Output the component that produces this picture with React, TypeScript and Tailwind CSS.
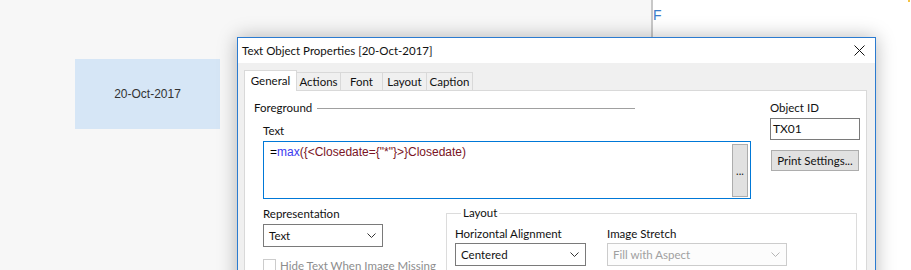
import React from "react";

const ui = { fontFamily: "Lato, 'Liberation Sans', sans-serif" };
const arial = { fontFamily: "'Liberation Sans', Arial, sans-serif" };

function Chevron({ color = "#333" }: { color?: string }) {
  return (
    <svg width="9" height="5" viewBox="0 0 9 5" className="shrink-0">
      <polyline points="0.5,0.5 4.5,4.5 8.5,0.5" fill="none" stroke={color} strokeWidth="1" />
    </svg>
  );
}

function Select({ value, width, disabled }: { value: string; width: string; disabled?: boolean }) {
  return (
    <div
      className={`${width} h-[23px] flex items-center justify-between pl-[5px] pr-[6px] border ${
        disabled ? "border-[#cccccc] bg-[#fcfcfc] text-[#a0a0a0]" : "border-[#7a7a7a] bg-white text-[#111]"
      }`}
    >
      <span className="text-[11.5px] leading-[16px]">{value}</span>
      <Chevron color={disabled ? "#b5b5b5" : "#333"} />
    </div>
  );
}

export default function App() {
  return (
    <div className="relative w-[911px] h-[270px] overflow-hidden bg-white" style={ui}>
      {/* background sheet */}
      <div className="flex h-full">
        <div className="w-[651px] h-full bg-[#f7f7f7] relative">
          <div className="absolute left-[75px] top-[59px] w-[145px] h-[70px] bg-[#d6e6f6] flex items-center justify-center">
            <span className="text-[12px] text-[#333]" style={arial}>20-Oct-2017</span>
          </div>
        </div>
        <div className="w-[2px] h-full bg-[#c8c8c8]" />
        <div className="flex-1 h-full bg-white relative">
          <span className="absolute left-0 top-[5px] text-[14px] leading-[20px] text-[#3b7dc9]" style={arial}>F</span>
          <span className="absolute right-[1px] top-0 w-[2px] h-[2px] bg-[#f6c445]" />
        </div>
      </div>

      {/* dialog window */}
      <div className="absolute left-[237px] top-[37px] w-[639px] h-[260px] border border-[#2b7bd0] bg-[#f0f0f0] shadow-[0_0_18px_rgba(0,0,0,0.28)] flex flex-col">
        {/* title bar */}
        <div className="h-[25px] bg-white flex items-center justify-between pl-[4px] pr-[10px] shrink-0">
          <span className="text-[11.5px] text-[#111] leading-[16px]">Text Object Properties [20-Oct-2017]</span>
          <svg width="11" height="11" viewBox="0 0 11 11">
            <line x1="0.5" y1="0.5" x2="10.5" y2="10.5" stroke="#111" strokeWidth="1" />
            <line x1="10.5" y1="0.5" x2="0.5" y2="10.5" stroke="#111" strokeWidth="1" />
          </svg>
        </div>

        {/* body */}
        <div className="flex-1 pt-[7px] pl-[6px] pr-[8px] flex flex-col">
          {/* tabs */}
          <div className="flex items-end h-[21px] relative z-10 text-[11.5px] text-[#111]">
            <div className="w-[53px] h-[21px] bg-white border border-b-0 border-[#d9d9d9] flex items-center justify-center">
              General
            </div>
            <div className="w-[44px] h-[19px] border border-l-0 border-b-0 border-[#d9d9d9] flex items-center justify-center">
              Actions
            </div>
            <div className="w-[42px] h-[19px] border border-l-0 border-b-0 border-[#d9d9d9] flex items-center justify-center">
              Font
            </div>
            <div className="w-[44px] h-[19px] border border-l-0 border-b-0 border-[#d9d9d9] flex items-center justify-center">
              Layout
            </div>
            <div className="w-[46px] h-[19px] border border-l-0 border-b-0 border-[#d9d9d9] flex items-center justify-center">
              Caption
            </div>
          </div>

          {/* tab panel */}
          <div className="-mt-px flex-1 bg-white border border-[#d9d9d9] text-[11.5px] text-[#111] leading-[16px]">
            {/* top section */}
            <div className="flex">
              <div className="pl-[9px] w-[507px] shrink-0">
                <div className="mt-[9px] flex items-center h-[16px]">
                  <span>Foreground</span>
                  <div className="ml-[5px] w-[318px] h-px bg-[#a0a0a0]" />
                </div>
                <div className="pl-[9px]">
                  <div className="mt-[7px]">Text</div>
                  <div className="mt-[2px] w-[488px] h-[58px] border border-[#0078d7] bg-white relative flex">
                    <div className="flex-1 pl-[6px] pt-[3px] text-[12px] leading-[14px]" style={arial}>
                      <span className="text-black">=</span>
                      <span className="text-[#3b3bf0]">max</span>
                      <span className="text-[#7a1424]">{'({<Closedate={"*"}>}Closedate)'}</span>
                    </div>
                    <div className="mt-[2px] mr-[2px] w-[16px] h-[53px] bg-[#e1e1e1] border border-[#adadad] flex items-center justify-center text-[11px] text-[#222]">
                      ...
                    </div>
                  </div>
                </div>
              </div>
              <div className="ml-[18px] w-[91px] shrink-0">
                <div className="mt-[9px] h-[16px]">Object ID</div>
                <div className="mt-[2px] w-[90px] h-[22px] border border-[#7a7a7a] bg-white pl-[2px] flex items-center text-[12px]">
                  TX01
                </div>
                <div className="mt-[10px] ml-px w-[88px] h-[21px] bg-[#e1e1e1] border border-[#adadad] flex items-center justify-center">
                  Print Settings...
                </div>
              </div>
            </div>

            {/* bottom section */}
            <div className="flex pl-[18px]">
              <div className="w-[120px] shrink-0">
                <div className="mt-[7px] h-[16px]">Representation</div>
                <div className="mt-[2px]">
                  <Select value="Text" width="w-[120px]" />
                </div>
                <div className="mt-[12px] flex items-start h-[14px] overflow-visible">
                  <div className="w-[13px] h-[13px] shrink-0 border border-[#cccccc] bg-white" />
                  <span className="ml-[4px] -mt-[1px] whitespace-nowrap text-[#8d8d8d]">Hide Text When Image Missing</span>
                </div>
              </div>
              <fieldset className="ml-[63px] mt-[6px] w-[411px] border border-[#dcdcdc] pl-[8px] pt-[5px] h-[80px]">
                <legend className="ml-[6px] px-[2px] leading-[16px]">Layout</legend>
                <div className="flex">
                  <div className="w-[131px]">
                    <div className="h-[16px]">Horizontal Alignment</div>
                    <div className="mt-px">
                      <Select value="Centered" width="w-[131px]" />
                    </div>
                  </div>
                  <div className="ml-[21px] w-[180px]">
                    <div className="h-[16px]">Image Stretch</div>
                    <div className="mt-px">
                      <Select value="Fill with Aspect" width="w-[180px]" disabled />
                    </div>
                  </div>
                </div>
              </fieldset>
            </div>
          </div>
        </div>
      </div>
    </div>
  );
}
